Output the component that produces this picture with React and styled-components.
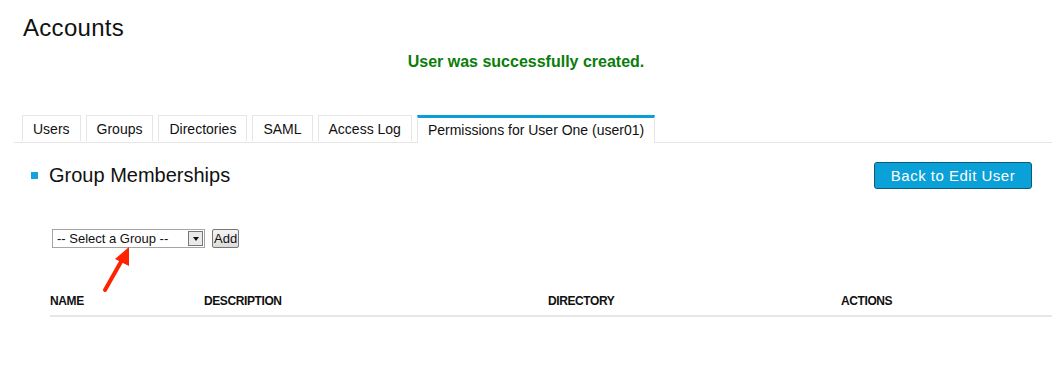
import React from 'react';
import styled, { createGlobalStyle } from 'styled-components';

const GlobalStyle = createGlobalStyle`
  body {
    margin: 0;
    background: #fff;
    font-family: "Liberation Sans", Arial, sans-serif;
    color: #111;
  }
`;

const Page = styled.div`
  width: 1052px;
  height: 366px;
  overflow: hidden;
  padding-top: 14px;
  box-sizing: border-box;
`;

const Title = styled.h1`
  margin: 0 0 0 23px;
  font-size: 24px;
  font-weight: normal;
  letter-spacing: 0.3px;
  line-height: 28px;
`;

const Notice = styled.div`
  text-align: center;
  color: #0a7d0a;
  font-weight: bold;
  font-size: 16px;
  line-height: 18px;
  margin-top: 11px;
`;

const TabBar = styled.div`
  display: flex;
  gap: 5px;
  margin: 44px 0 0 14px;
  padding-left: 8px;
  border-bottom: 1px solid #e6e6e6;
`;

const Tab = styled.div`
  padding: 0 10px;
  height: 25px;
  line-height: ${p => (p.$active ? '24px' : '26px')};
  font-size: 14px;
  color: #111;
  border: 1px solid #e6e6e6;
  border-top: ${p => (p.$active ? '3px solid #0b9dd5' : '1px solid #e6e6e6')};
  border-bottom: none;
  margin-bottom: ${p => (p.$active ? '-1px' : '0')};
  background: #fff;
`;

const SectionHead = styled.div`
  display: flex;
  align-items: center;
  justify-content: space-between;
  margin: 19px 20px 0 31px;
`;

const SectionTitle = styled.h2`
  display: flex;
  align-items: center;
  gap: 11px;
  margin: 0;
  font-size: 20px;
  font-weight: normal;
  &::before {
    content: '';
    width: 7px;
    height: 7px;
    background: #14a3dc;
  }
`;

const BlueButton = styled.button`
  font-family: "Liberation Sans", Arial, sans-serif;
  font-size: 15px;
  letter-spacing: 0.5px;
  color: #fff;
  background: #0aa0d8;
  border: 1px solid #0b5b76;
  border-radius: 3px;
  width: 158px;
  height: 27px;
  padding: 0;
`;

const AddRow = styled.div`
  display: flex;
  align-items: center;
  gap: 7px;
  margin: 40px 0 0 52px;
`;

const SelectBox = styled.div`
  display: flex;
  align-items: center;
  justify-content: space-between;
  width: 153px;
  height: 19px;
  box-sizing: border-box;
  border: 1px solid #a5a5a5;
  font-size: 13px;
  padding-left: 4px;
  padding-right: 1px;
  color: #111;
`;

const DropArrow = styled.span`
  width: 15px;
  height: 15px;
  box-sizing: border-box;
  border: 1px solid #777;
  background: #eaeaea;
  display: flex;
  align-items: center;
  justify-content: center;
  &::after {
    content: '';
    border-left: 3px solid transparent;
    border-right: 3px solid transparent;
    border-top: 4px solid #111;
  }
`;

const AddButton = styled.button`
  font-family: "Liberation Sans", Arial, sans-serif;
  font-size: 13px;
  height: 19px;
  padding: 0 1px;
  border: 1px solid #777;
  border-radius: 2px;
  background: linear-gradient(#f4f4f4, #dcdcdc);
  color: #111;
`;

const ArrowWrap = styled.div`
  position: relative;
  height: 0;
`;

const PointerSvg = styled.svg`
  position: absolute;
  left: 100px;
  top: -2px;
`;

const Table = styled.div`
  margin: 46px 0 0 50px;
`;

const HeadRow = styled.div`
  display: grid;
  grid-template-columns: 154px 344px 293px 1fr;
  border-bottom: 2px solid #e6e6e6;
  padding-bottom: 7px;
`;

const HeadCell = styled.div`
  font-size: 12px;
  font-weight: bold;
  letter-spacing: -0.4px;
  color: #111;
`;

export default function App() {
  const tabs = ['Users', 'Groups', 'Directories', 'SAML', 'Access Log'];
  return (
    <Page>
      <GlobalStyle />
      <Title>Accounts</Title>
      <Notice>User was successfully created.</Notice>
      <TabBar>
        {tabs.map(t => (
          <Tab key={t}>{t}</Tab>
        ))}
        <Tab $active>Permissions for User One (user01)</Tab>
      </TabBar>
      <SectionHead>
        <SectionTitle>Group Memberships</SectionTitle>
        <BlueButton>Back to Edit User</BlueButton>
      </SectionHead>
      <AddRow>
        <SelectBox>
          -- Select a Group --
          <DropArrow />
        </SelectBox>
        <AddButton>Add</AddButton>
      </AddRow>
      <ArrowWrap>
        <PointerSvg width="36" height="48" viewBox="0 0 36 48">
          <line x1="5" y1="44" x2="22" y2="14" stroke="#ff2200" strokeWidth="4" strokeLinecap="round" />
          <polygon points="29,1 15,13 29,20" fill="#ff2200" />
        </PointerSvg>
      </ArrowWrap>
      <Table>
        <HeadRow>
          <HeadCell>NAME</HeadCell>
          <HeadCell>DESCRIPTION</HeadCell>
          <HeadCell>DIRECTORY</HeadCell>
          <HeadCell>ACTIONS</HeadCell>
        </HeadRow>
      </Table>
    </Page>
  );
}
